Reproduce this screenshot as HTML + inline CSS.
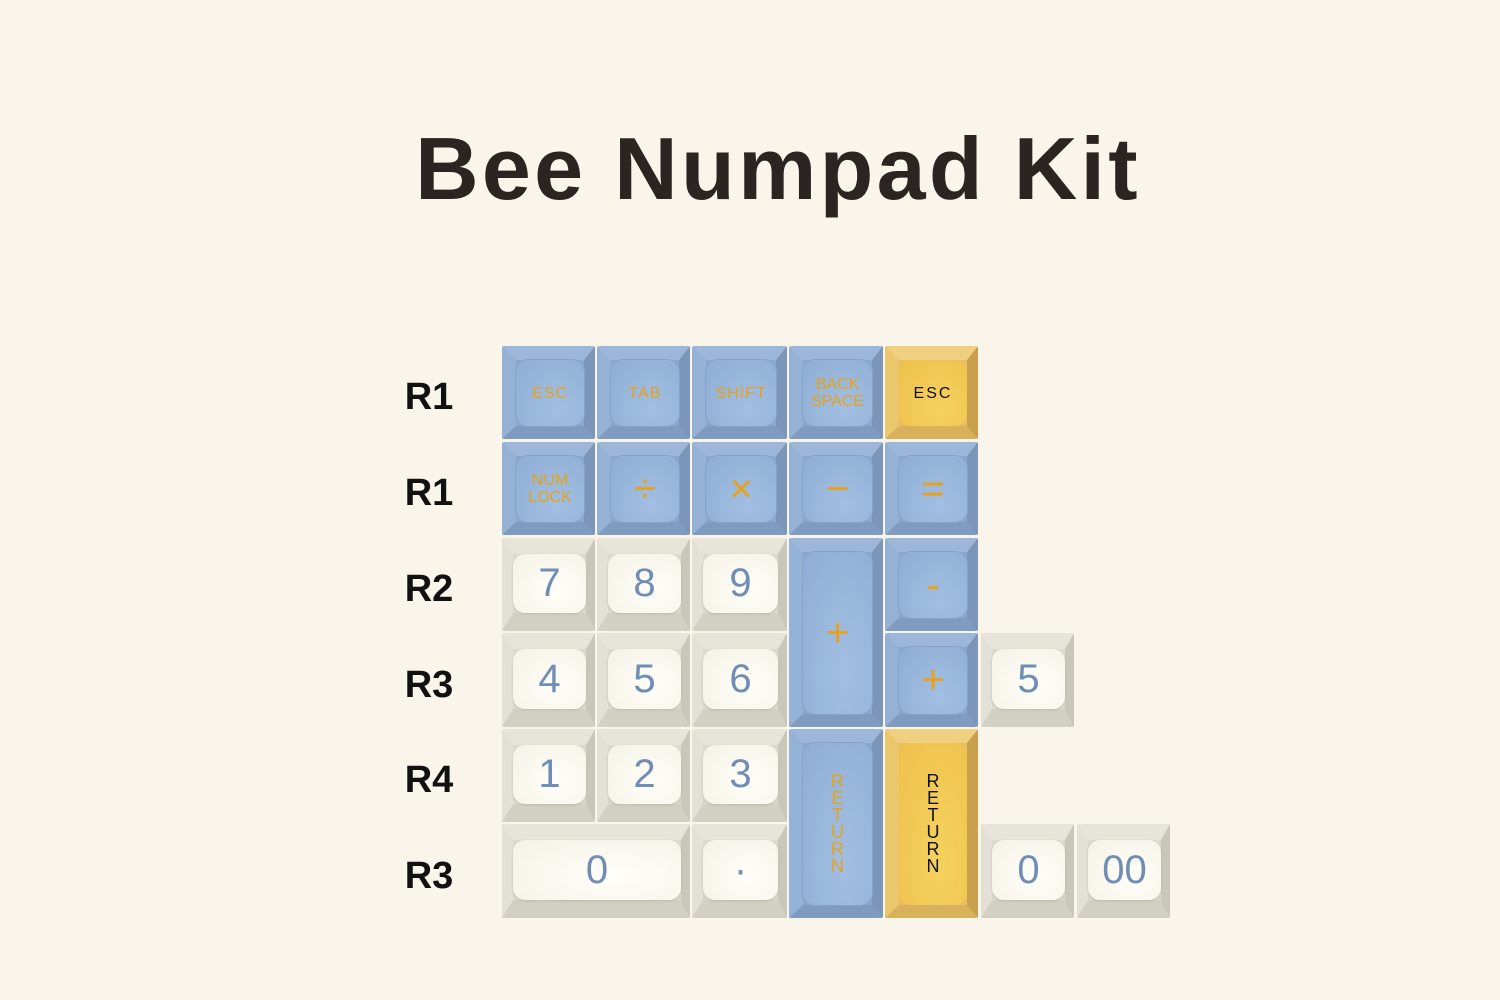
<!DOCTYPE html>
<html><head><meta charset="utf-8"><style>
body{margin:0;width:1500px;height:1000px;background:#f9f5ea;position:relative;overflow:hidden;font-family:"Liberation Sans",sans-serif}
h1{position:absolute;left:0;width:1556px;top:118px;margin:0;text-align:center;font-size:88px;font-weight:bold;color:#2b2522;letter-spacing:3.3px}
.lb{position:absolute;left:397px;width:64px;text-align:center;font-weight:bold;font-size:38px;color:#111}
.k{position:absolute;box-sizing:border-box;border-radius:2px;border-style:solid;border-width:14px 11px 13px 14px}
.k .f{position:absolute;inset:0;border-radius:12px;display:flex;align-items:center;justify-content:center;text-align:center}
.b{background:#8ba7cb;border-color:#9cb7d9 #7c96b9 #7f9bc0 #95b1d4}
.b .f{background:radial-gradient(ellipse at 60% 75%,#a2bfe2,#8fadd4);box-shadow:0 0 0 1px #86a2c8;color:#e5a21a}
.y{background:#e6bd5f;border-color:#efcf80 #c9a14e #d8b15a #ebc66a}
.y .f{background:radial-gradient(ellipse at 60% 75%,#f5d15e,#efc04c);color:#111}
.w{background:#dcd9cd;border-color:#e7e4d9 #c9c6ba #d2cfc3 #e3e0d5;border-width:16px 9px 18px 11px}
.w .f{background:radial-gradient(ellipse at 60% 60%,#fffef8,#f4f2e6);box-shadow:0 1px 2px #bdb9ac;color:#6f8db5;font-size:40px}
.s{font-size:16px;line-height:17px;letter-spacing:1px}
.sym{font-size:40px}
.v{font-size:18px;line-height:17px}
</style></head><body>
<h1>Bee Numpad Kit</h1>
<div class="lb" style="top:376px">R1</div>
<div class="lb" style="top:472px">R1</div>
<div class="lb" style="top:568px">R2</div>
<div class="lb" style="top:664px">R3</div>
<div class="lb" style="top:759px">R4</div>
<div class="lb" style="top:855px">R3</div>

<div class="k b" style="left:502px;top:346px;width:93px;height:93px"><div class="f s">ESC</div></div>
<div class="k b" style="left:597px;top:346px;width:93px;height:93px"><div class="f s">TAB</div></div>
<div class="k b" style="left:692px;top:346px;width:95px;height:93px"><div class="f s">SHIFT</div></div>
<div class="k b" style="left:789px;top:346px;width:94px;height:93px"><div class="f s" style="letter-spacing:0">BACK<br>SPACE</div></div>
<div class="k y" style="left:885px;top:346px;width:93px;height:93px"><div class="f s" style="letter-spacing:2px">ESC</div></div>

<div class="k b" style="left:502px;top:442px;width:93px;height:93px"><div class="f s" style="letter-spacing:0">NUM<br>LOCK</div></div>
<div class="k b" style="left:597px;top:442px;width:93px;height:93px"><div class="f sym">÷</div></div>
<div class="k b" style="left:692px;top:442px;width:95px;height:93px"><div class="f sym">×</div></div>
<div class="k b" style="left:789px;top:442px;width:94px;height:93px"><div class="f sym">−</div></div>
<div class="k b" style="left:885px;top:442px;width:93px;height:93px"><div class="f sym">=</div></div>

<div class="k w" style="left:502px;top:538px;width:93px;height:93px"><div class="f">7</div></div>
<div class="k w" style="left:597px;top:538px;width:93px;height:93px"><div class="f">8</div></div>
<div class="k w" style="left:692px;top:538px;width:95px;height:93px"><div class="f">9</div></div>
<div class="k b" style="left:789px;top:538px;width:94px;height:189px"><div class="f sym">+</div></div>
<div class="k b" style="left:885px;top:538px;width:93px;height:93px"><div class="f sym">-</div></div>

<div class="k w" style="left:502px;top:633px;width:93px;height:94px"><div class="f">4</div></div>
<div class="k w" style="left:597px;top:633px;width:93px;height:94px"><div class="f">5</div></div>
<div class="k w" style="left:692px;top:633px;width:95px;height:94px"><div class="f">6</div></div>
<div class="k b" style="left:885px;top:633px;width:93px;height:94px"><div class="f sym">+</div></div>
<div class="k w" style="left:981px;top:633px;width:93px;height:94px"><div class="f">5</div></div>

<div class="k w" style="left:502px;top:729px;width:93px;height:93px"><div class="f">1</div></div>
<div class="k w" style="left:597px;top:729px;width:93px;height:93px"><div class="f">2</div></div>
<div class="k w" style="left:692px;top:729px;width:95px;height:93px"><div class="f">3</div></div>
<div class="k b" style="left:789px;top:729px;width:94px;height:189px"><div class="f v">R<br>E<br>T<br>U<br>R<br>N</div></div>
<div class="k y" style="left:885px;top:729px;width:93px;height:189px"><div class="f v">R<br>E<br>T<br>U<br>R<br>N</div></div>

<div class="k w" style="left:502px;top:824px;width:188px;height:94px"><div class="f">0</div></div>
<div class="k w" style="left:692px;top:824px;width:95px;height:94px"><div class="f">·</div></div>
<div class="k w" style="left:981px;top:824px;width:93px;height:94px"><div class="f">0</div></div>
<div class="k w" style="left:1077px;top:824px;width:93px;height:94px"><div class="f">00</div></div>
</body></html>
